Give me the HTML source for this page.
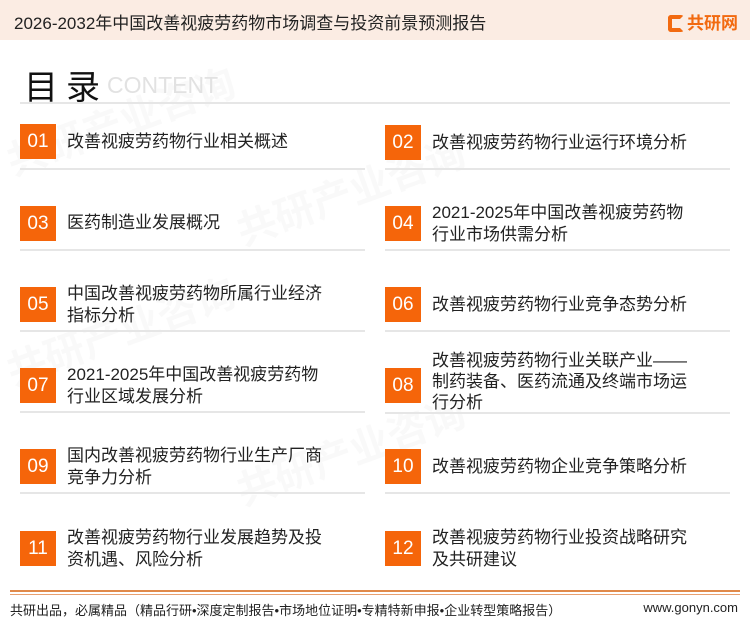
<!DOCTYPE html>
<html><head><meta charset="utf-8"><style>
*{margin:0;padding:0;box-sizing:border-box}
body{width:750px;height:622px;position:relative;background:#fff;font-family:"Liberation Sans","Noto Sans CJK SC",sans-serif;color:#222;overflow:hidden}
.hdr{position:absolute;left:0;top:0;width:750px;height:40px;background:#fbece3}
.ttl{position:absolute;left:14px;top:9px;font-size:17px;color:#222}
.logo{position:absolute;left:668px;top:9px;font-size:17px;font-weight:bold;color:#f26a10}
.logo i{display:inline-block;width:16px;height:17px;border:4px solid #f26a10;border-radius:3px;vertical-align:-3px;margin-right:3px;border-right-color:transparent}
.mulu{position:absolute;left:24px;top:60px;font-size:34px;color:#111;letter-spacing:8px}
.cont{position:absolute;left:107px;top:72px;font-size:23px;color:#e2e2e2}
.hl{position:absolute;height:2px;background:#e6e6e6}
.box{position:absolute;width:36px;height:35px;background:#f5650a;color:#fff;font-size:19px;text-align:center;line-height:35px}
.t{position:absolute;font-size:17px;line-height:22px;color:#222;white-space:nowrap}
.ft{position:absolute;left:10px;top:600px;font-size:13px;color:#222}
.fr{position:absolute;right:12px;top:600px;font-size:13px;color:#222}
.wm{position:absolute;font-size:40px;font-weight:bold;color:rgba(0,0,0,0.025);transform:rotate(-20deg);white-space:nowrap}
</style></head><body>
<div class="hdr"></div>
<div class="ttl">2026-2032年中国改善视疲劳药物市场调查与投资前景预测报告</div>
<div class="logo"><i></i>共研网</div>
<div class="wm" style="left:0;top:90px">共研产业咨询</div>
<div class="wm" style="left:230px;top:160px">共研产业咨询</div>
<div class="wm" style="left:0;top:300px">共研产业咨询</div>
<div class="wm" style="left:230px;top:420px">共研产业咨询</div>
<div class="mulu">目录</div>
<div class="cont">CONTENT</div>
<div class="hl" style="left:20px;top:102px;width:710px"></div>

<div class="box" style="left:20px;top:124px">01</div><div class="t" style="left:67px;top:131px">改善视疲劳药物行业相关概述</div>
<div class="box" style="left:385px;top:125px">02</div><div class="t" style="left:432px;top:132px">改善视疲劳药物行业运行环境分析</div>
<div class="hl" style="left:20px;top:168px;width:345px"></div><div class="hl" style="left:385px;top:168px;width:345px"></div>

<div class="box" style="left:20px;top:206px">03</div><div class="t" style="left:67px;top:212px">医药制造业发展概况</div>
<div class="box" style="left:385px;top:206px">04</div><div class="t" style="left:432px;top:202px">2021-2025年中国改善视疲劳药物<br>行业市场供需分析</div>
<div class="hl" style="left:20px;top:249px;width:345px"></div><div class="hl" style="left:385px;top:249px;width:345px"></div>

<div class="box" style="left:20px;top:287px">05</div><div class="t" style="left:67px;top:283px">中国改善视疲劳药物所属行业经济<br>指标分析</div>
<div class="box" style="left:385px;top:287px">06</div><div class="t" style="left:432px;top:294px">改善视疲劳药物行业竞争态势分析</div>
<div class="hl" style="left:20px;top:330px;width:345px"></div><div class="hl" style="left:385px;top:330px;width:345px"></div>

<div class="box" style="left:20px;top:368px">07</div><div class="t" style="left:67px;top:364px">2021-2025年中国改善视疲劳药物<br>行业区域发展分析</div>
<div class="box" style="left:385px;top:368px">08</div><div class="t" style="left:432px;top:350px;line-height:21px">改善视疲劳药物行业关联产业——<br>制药装备、医药流通及终端市场运<br>行分析</div>
<div class="hl" style="left:20px;top:411px;width:345px"></div><div class="hl" style="left:385px;top:412px;width:345px"></div>

<div class="box" style="left:20px;top:449px">09</div><div class="t" style="left:67px;top:445px">国内改善视疲劳药物行业生产厂商<br>竞争力分析</div>
<div class="box" style="left:385px;top:449px">10</div><div class="t" style="left:432px;top:456px">改善视疲劳药物企业竞争策略分析</div>
<div class="hl" style="left:20px;top:492px;width:345px"></div><div class="hl" style="left:385px;top:492px;width:345px"></div>

<div class="box" style="left:20px;top:531px">11</div><div class="t" style="left:67px;top:527px">改善视疲劳药物行业发展趋势及投<br>资机遇、风险分析</div>
<div class="box" style="left:385px;top:531px">12</div><div class="t" style="left:432px;top:527px">改善视疲劳药物行业投资战略研究<br>及共研建议</div>

<div style="position:absolute;left:10px;top:590px;width:730px;height:2px;background:#e0894a"></div>
<div style="position:absolute;left:10px;top:594px;width:730px;height:1px;background:#e8a070"></div>
<div class="ft">共研出品，必属精品（精品行研•深度定制报告•市场地位证明•专精特新申报•企业转型策略报告）</div>
<div class="fr">www.gonyn.com</div>
</body></html>
